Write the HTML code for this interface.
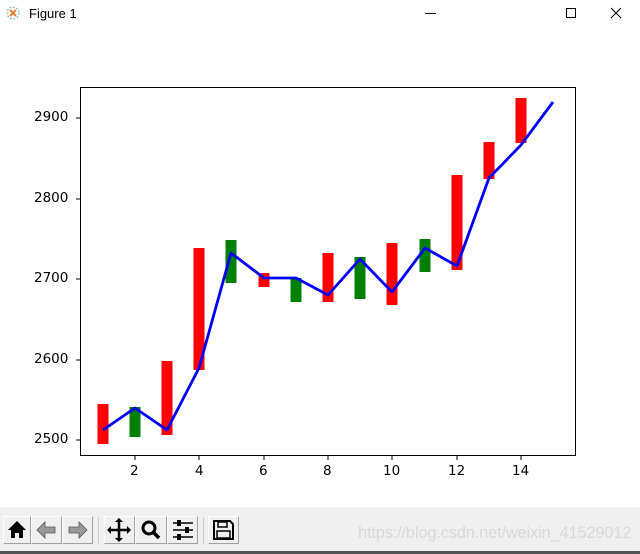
<!DOCTYPE html>
<html><head><meta charset="utf-8"><style>
body{margin:0;width:640px;height:554px;background:#fff;position:relative;overflow:hidden;font-family:"Liberation Sans","DejaVu Sans",sans-serif}
.t{position:absolute;font-size:13.5px;color:#000;font-family:"DejaVu Sans","Liberation Sans",sans-serif}
.btn{position:absolute;top:516px;height:28px;background:#f0f0f0;border-top:1px solid #fff;border-left:1px solid #fff;border-right:1px solid #a0a0a0;border-bottom:1px solid #a0a0a0;box-sizing:border-box}
.sep{position:absolute;top:517px;width:1px;height:27px;background:#c8c8c8}
</style></head><body>
<svg width="640" height="554" style="position:absolute;left:0;top:0">
<rect x="0" y="507" width="640" height="45" fill="#f0f0f0"/>
<rect x="0" y="551" width="640" height="3" fill="#555"/>
<circle cx="13" cy="13" r="6" fill="none" stroke="#7aa" stroke-dasharray="2 1.5"/>
<path d="M10 10 L16 16 M16 10 L10 16" stroke="#e08030" stroke-width="2"/>
<path d="M425 13.5 H436" stroke="#000"/>
<rect x="566.5" y="8.5" width="9" height="9" fill="none" stroke="#000"/>
<path d="M611 8 L621 18 M621 8 L611 18" stroke="#000"/>
<rect x="80.5" y="87.5" width="495" height="368" fill="none" stroke="#000"/>
<g stroke="#000">
<path d="M135 456v4M199 456v4M264 456v4M328 456v4M392 456v4M457 456v4M521 456v4"/>
<path d="M80 440h-4M80 360h-4M80 279h-4M80 199h-4M80 118h-4"/>
</g>
<g>
<rect x="97.5" y="404" width="11" height="40" fill="#f00"/>
<rect x="129.5" y="407" width="11" height="30" fill="#008000"/>
<rect x="161.5" y="361" width="11" height="74" fill="#f00"/>
<rect x="193.5" y="248" width="11" height="122" fill="#f00"/>
<rect x="225.5" y="240" width="11" height="43" fill="#008000"/>
<rect x="258.5" y="273" width="11" height="14" fill="#f00"/>
<rect x="290.5" y="278" width="11" height="24" fill="#008000"/>
<rect x="322.5" y="253" width="11" height="49" fill="#f00"/>
<rect x="354.5" y="257" width="11" height="42" fill="#008000"/>
<rect x="386.5" y="243" width="11" height="62" fill="#f00"/>
<rect x="419.5" y="239" width="11" height="33" fill="#008000"/>
<rect x="451.5" y="175" width="11" height="95" fill="#f00"/>
<rect x="483.5" y="142" width="11" height="37" fill="#f00"/>
<rect x="515.5" y="98" width="11" height="45" fill="#f00"/>
</g>
<polyline points="103,430 135,408 167,430 199,368 231,253 264,278 296,278 328,295 360,259 392,292 425,248 457,266 489,178 521,145 553,102" fill="none" stroke="#0000ff" stroke-width="2.8" stroke-linejoin="round"/>
</svg>
<div class="t" style="left:29px;top:6px;font-family:'Liberation Sans',sans-serif;font-size:13px">Figure 1</div>
<div class="t" style="left:34px;top:431px">2500</div>
<div class="t" style="left:34px;top:351px">2600</div>
<div class="t" style="left:34px;top:270px">2700</div>
<div class="t" style="left:34px;top:190px">2800</div>
<div class="t" style="left:34px;top:109px">2900</div>
<div class="t" style="left:130px;top:463px">2</div>
<div class="t" style="left:195px;top:463px">4</div>
<div class="t" style="left:259px;top:463px">6</div>
<div class="t" style="left:323px;top:463px">8</div>
<div class="t" style="left:383px;top:463px">10</div>
<div class="t" style="left:448px;top:463px">12</div>
<div class="t" style="left:512px;top:463px">14</div>
<div class="btn" style="left:3px;width:28px"></div>
<div class="btn" style="left:31px;width:31px"></div>
<div class="btn" style="left:62px;width:31px"></div>
<div class="sep" style="left:98px"></div>
<div class="btn" style="left:104px;width:31px"></div>
<div class="btn" style="left:135px;width:32px"></div>
<div class="btn" style="left:167px;width:31px"></div>
<div class="sep" style="left:203px"></div>
<div class="btn" style="left:208px;width:31px"></div>
<svg width="640" height="554" style="position:absolute;left:0;top:0">
<path d="M8 530 L17 521 L26 530 L23 530 L23 538 L19 538 L19 533 L15 533 L15 538 L11 538 L11 530 Z" fill="#000"/>
<path d="M37 530 L45 522 L45 527 L55 527 L55 533 L45 533 L45 538 Z" fill="#999" stroke="#555" stroke-width="0.8"/>
<path d="M87 530 L79 522 L79 527 L69 527 L69 533 L79 533 L79 538 Z" fill="#999" stroke="#555" stroke-width="0.8"/>
<g stroke="#000" stroke-width="2.5" fill="#000"><path d="M119 520 V540 M109 530 H129"/></g>
<path d="M119 518 l-4 4 h8Z M119 542 l-4 -4 h8Z M107 530 l4 -4 v8Z M131 530 l-4 -4 v8Z" fill="#000"/>
<circle cx="149" cy="528" r="6" fill="none" stroke="#000" stroke-width="3"/>
<path d="M153 532 L159 538" stroke="#000" stroke-width="3.5"/>
<g stroke="#000" stroke-width="1.5"><path d="M173 523H193M173 530H193M173 537H193"/></g>
<g fill="#000"><rect x="177" y="520" width="4" height="6"/><rect x="185" y="527" width="4" height="6"/><rect x="177" y="534" width="4" height="6"/></g>
<path d="M214 521 H230 L233 524 V539 H214 Z" fill="none" stroke="#000" stroke-width="2"/>
<rect x="218" y="522" width="9" height="5" fill="none" stroke="#000" stroke-width="1.5"/>
<rect x="217" y="531" width="13" height="7" fill="none" stroke="#000" stroke-width="1.5"/>
</svg>
<div style="position:absolute;left:358px;top:524px;font-size:16.5px;color:#d8d8d8;letter-spacing:-0.2px">https://blog.csdn.net/weixin_41529012</div>
</body></html>
